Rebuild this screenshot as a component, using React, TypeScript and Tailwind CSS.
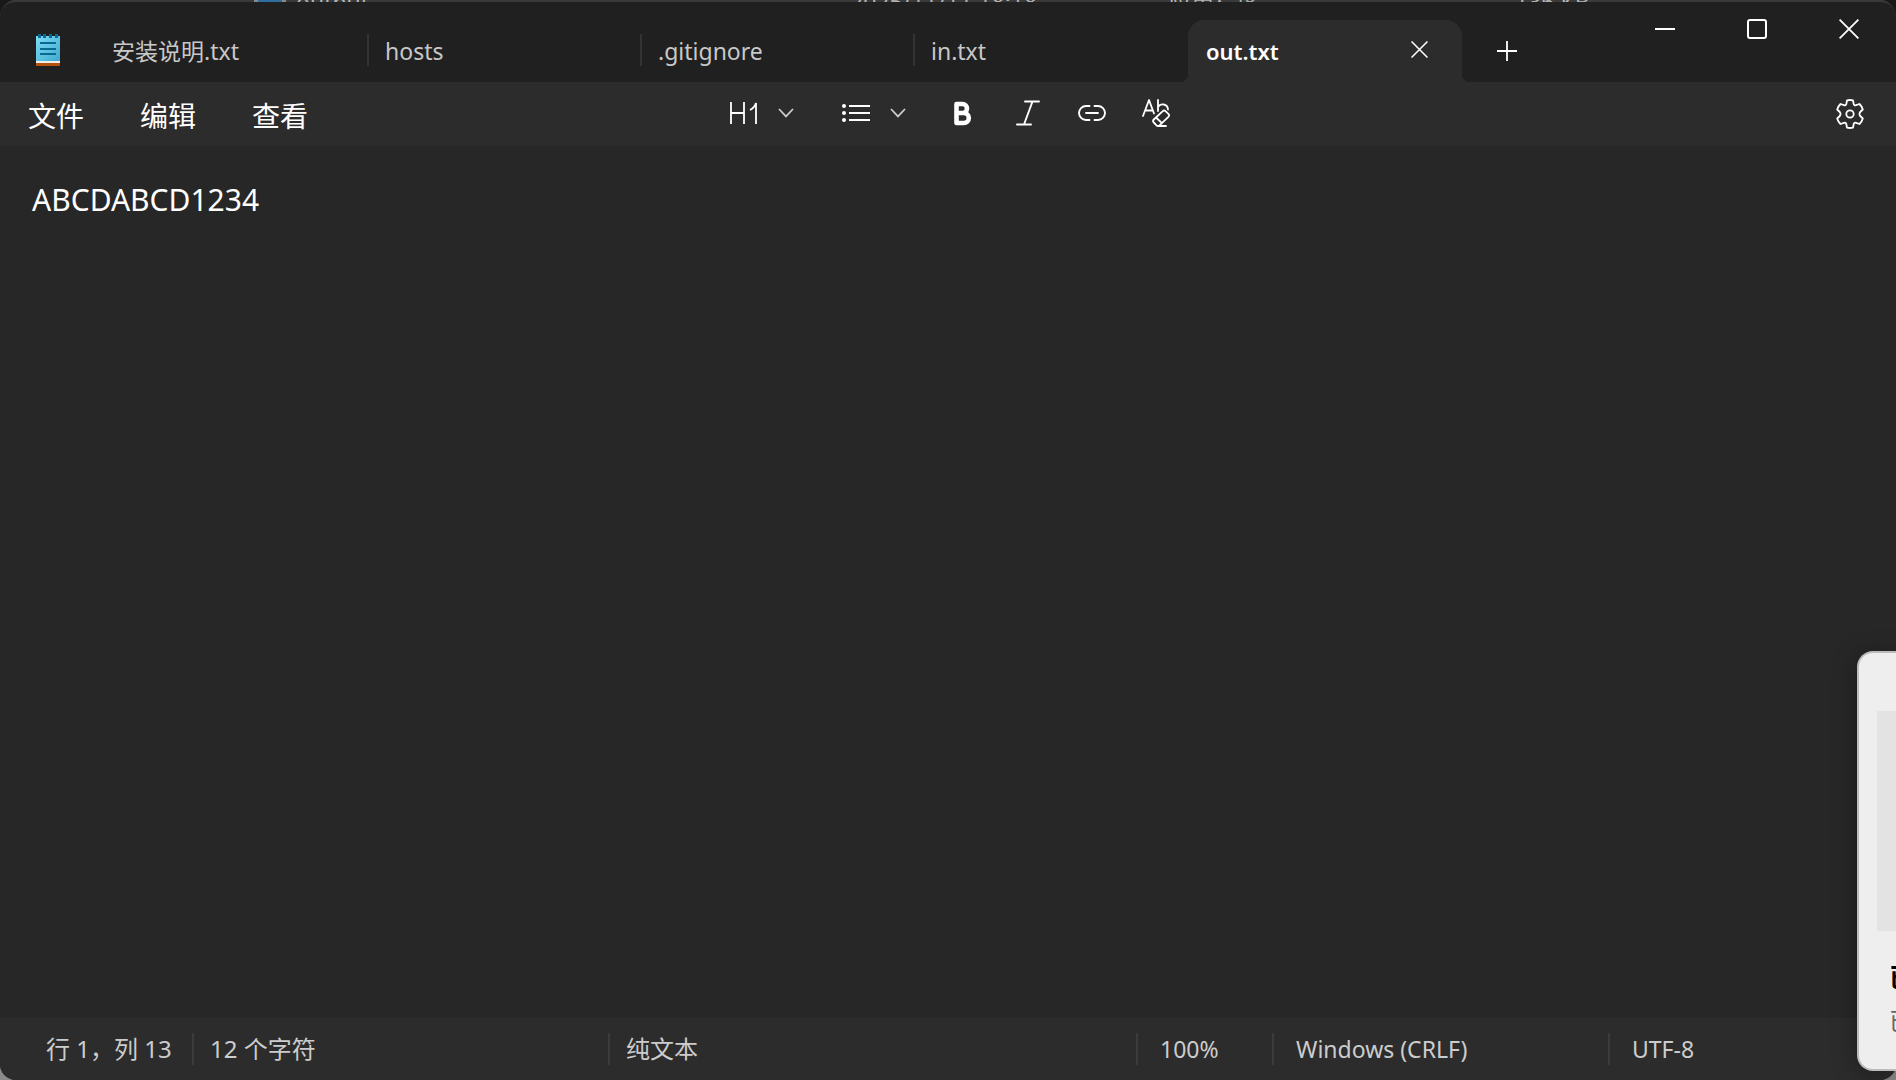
import { useState } from "react";

interface TabItem {
  id: number;
  name: string;
}

const tabs: TabItem[] = [
  { id: 1, name: "安装说明.txt" },
  { id: 2, name: "hosts" },
  { id: 3, name: ".gitignore" },
  { id: 4, name: "in.txt" },
  { id: 5, name: "out.txt" },
];

const menus = ["文件", "编辑", "查看"];

const NotepadIcon = () => (
  <svg width="24" height="32" viewBox="0 0 24 32" aria-hidden="true">
    <defs>
      <linearGradient id="page" x1="0" y1="0" x2="1" y2="1">
        <stop offset="0" stopColor="#7fdcf5" />
        <stop offset="1" stopColor="#3fa9cf" />
      </linearGradient>
    </defs>
    <path d="M0 28h24v3a1 1 0 0 1-1 1H0z" fill="#b35309" />
    <path d="M0 26h24v3H0z" fill="#f0eeec" />
    <path d="M0 2h24v25H0z" fill="url(#page)" />
    <path d="M2 0h3v4H2zM7 0h3v4H7zM13 0h3v4h-3zM19 0h3v4h-3z" fill="#056b92" />
    <path d="M4 9h16M4 15h16M4 20h16" stroke="#056b92" strokeWidth="2" />
  </svg>
);

const ChevronIcon = () => (
  <svg width="16" height="10" viewBox="0 0 16 10" fill="none" stroke="#cfcfcf" strokeWidth="1.7" aria-hidden="true">
    <path d="M1 1l7 7.4L15 1" />
  </svg>
);

const CrossIcon = ({ size }: { size: number }) => (
  <svg width={size} height={size} viewBox="0 0 20 20" fill="none" stroke="currentColor" strokeWidth="1.8" aria-hidden="true">
    <path d="M.6.6l18.8 18.8M19.4.6L.6 19.4" />
  </svg>
);

const HeadingIcon = () => (
  <svg width="28" height="22" viewBox="0 0 28 22" fill="none" stroke="currentColor" strokeWidth="1.8" aria-hidden="true">
    <path d="M1 0v22M14 0v22M1 11h13M26 22V1c-1 3-3 5.500-6 7" />
  </svg>
);

const ListIcon = () => (
  <svg width="28" height="18" viewBox="0 0 28 18" fill="none" stroke="currentColor" strokeWidth="1.9" aria-hidden="true">
    <path d="M7 2h21M7 9h21M7 16h21" />
    <g fill="currentColor" stroke="none">
      <circle cx="2" cy="2" r="2" />
      <circle cx="2" cy="9" r="2" />
      <circle cx="2" cy="16" r="2" />
    </g>
  </svg>
);

const BoldIcon = () => (
  <svg width="18" height="25" viewBox="0 0 18 24" fill="none" stroke="currentColor" strokeWidth="4.600" strokeLinejoin="round" aria-hidden="true">
    <path d="M2.500 2.500h6a4.400 4.400 0 0 1 0 9h-6zM2.500 11.500h7.300a5 5 0 0 1 0 10H2.500z" />
  </svg>
);

const ItalicIcon = () => (
  <svg width="24" height="26" viewBox="0 0 24 26" fill="none" stroke="currentColor" strokeWidth="1.9" strokeLinecap="round" aria-hidden="true">
    <path d="M9 1.500h14M1 24.500h14M16.500 1.500L8 24.500" />
  </svg>
);

const LinkIcon = () => (
  <svg width="28" height="16" viewBox="0 0 28 16" fill="none" stroke="currentColor" strokeWidth="1.9" strokeLinecap="round" aria-hidden="true">
    <path d="M11.500 1H8a7 7 0 0 0 0 14h3.500M16.500 1H20a7 7 0 0 1 0 14h-3.500M8 8h12" />
  </svg>
);

const ClearFormatIcon = () => (
  <svg width="28" height="28" viewBox="0 0 28 28" fill="none" stroke="currentColor" strokeWidth="1.8" strokeLinecap="round" strokeLinejoin="round" aria-hidden="true">
    <path d="M1 17L7 1l5 13.500M3.200 11.500h7.800" />
    <path d="M16 1v11M16 8c2.500-4 9.500-3.500 10 2.500" />
    <path d="M20.500 12.300l-8.700 8.200c-1 1-1 2 0 3l2.700 2.800c.9.900 2 .9 3 0l8.900-8.500c.9-.9.900-2 0-3l-2.900-2.700c-.9-.8-2-.8-3 .2zM14 18.500l6 5.700M17 27h7" />
  </svg>
);

const GearIcon = () => (
  <svg width="28" height="30" viewBox="0 0 28 30" fill="none" stroke="currentColor" strokeWidth="1.800" strokeLinejoin="round" aria-hidden="true">
    <path d="M11 1.400Q14 .6 17 1.400L17.700 5Q18.200 6.800 20 6.200L23.500 5Q25.900 7.300 26.800 10.500L24.200 13Q22.800 15 24.200 17L26.800 19.500Q25.900 22.700 23.500 25L20 23.800Q18.200 23.200 17.700 25L17 28.600Q14 29.400 11 28.600L10.300 25Q9.800 23.200 8 23.800L4.500 25Q2.100 22.700 1.200 19.500L3.800 17Q5.200 15 3.800 13L1.200 10.500Q2.100 7.300 4.500 5L8 6.200Q9.800 6.800 10.300 5Z" />
    <circle cx="14" cy="15" r="3.700" />
  </svg>
);

// Sliver of the file explorer row behind the window
const ExplorerStrip = () => (
  <div className="absolute inset-x-0 top-0 flex h-[2px] items-start overflow-hidden bg-[#3a3a3a] text-[23px] leading-[4px] whitespace-nowrap text-[#b4b4b4]">
    <span className="ml-[254px] h-1 w-8 border-x-4 border-[#8a8a8a] bg-[#2f6f9f]" />
    <span className="ml-[10px] w-[554px]">output</span>
    <span className="w-[318px]">2025/11/11 18:18</span>
    <span className="w-[347px]">应用程序</span>
    <span>136 KB</span>
  </div>
);

const TitleBar = ({ activeTab, onSelect }: { activeTab: number; onSelect: (id: number) => void }) => (
  <header className="flex h-[82px] shrink-0 bg-[#202020] text-white">
    <div className="flex w-24 shrink-0 items-center justify-center pt-[18px]">
      <NotepadIcon />
    </div>
    <div className="flex min-w-0 flex-1 items-end">
      {tabs.map((tab, index) =>
        tab.id === activeTab ? (
          <div
            key={tab.id}
            className="relative flex h-[62px] w-[274px] items-center justify-between rounded-t-2xl bg-[#2c2c2c] pr-[34px] pl-[18px] before:absolute before:bottom-0 before:-left-2 before:size-2 before:rounded-br-lg before:shadow-[4px_4px_0_#2c2c2c] before:[clip-path:inset(0)] after:absolute after:-right-2 after:bottom-0 after:size-2 after:rounded-bl-lg after:shadow-[-4px_4px_0_#2c2c2c] after:[clip-path:inset(0)]"
          >
            <button className="text-[22px] font-semibold">{tab.name}</button>
            <button className="pb-1" aria-label="关闭选项卡">
              <CrossIcon size={17} />
            </button>
          </div>
        ) : (
          <div key={tab.id} className="flex h-[62px] w-[273px] items-center">
            <button
              onClick={() => onSelect(tab.id)}
              className="flex-1 pl-4 text-left text-[23px] text-[#c8c8c8]"
            >
              {tab.name}
            </button>
            {tabs[index + 1]?.id !== activeTab && <span className="mb-0.5 h-8 w-[2px] bg-[#333333]" />}
          </div>
        )
      )}
      <button className="flex h-[62px] w-[90px] items-center justify-center" aria-label="新建选项卡">
        <svg width="20" height="20" viewBox="0 0 20 20" stroke="currentColor" strokeWidth="1.8" aria-hidden="true">
          <path d="M10 0v20M0 10h20" />
        </svg>
      </button>
    </div>
    <div className="flex h-[58px] shrink-0 pr-px">
      <button className="flex w-[92px] items-center justify-center" aria-label="最小化">
        <span className="h-[2px] w-5 bg-white" />
      </button>
      <button className="flex w-[92px] items-center justify-center" aria-label="最大化">
        <span className="size-5 rounded-[3px] border-2 border-white" />
      </button>
      <button className="flex w-[92px] items-center justify-center" aria-label="关闭">
        <CrossIcon size={20} />
      </button>
    </div>
  </header>
);

const Toolbar = () => (
  <div className="flex h-16 shrink-0 items-center bg-[#2c2c2c] text-white">
    <nav className="flex flex-1 gap-14 pt-1 pl-7 text-[28px] leading-8">
      {menus.map((menu) => (
        <button key={menu}>{menu}</button>
      ))}
    </nav>
    <div className="flex items-center pb-0.5 pl-2">
      <button className="flex items-center gap-5" aria-label="标题">
        <HeadingIcon />
        <ChevronIcon />
      </button>
      <button className="ml-12 flex items-center gap-5" aria-label="列表">
        <ListIcon />
        <ChevronIcon />
      </button>
      <button className="ml-12" aria-label="加粗">
        <BoldIcon />
      </button>
      <button className="ml-11" aria-label="斜体">
        <ItalicIcon />
      </button>
      <button className="ml-[38px]" aria-label="链接">
        <LinkIcon />
      </button>
      <button className="ml-9" aria-label="清除格式">
        <ClearFormatIcon />
      </button>
    </div>
    <div className="flex flex-1 justify-end pr-8">
      <button aria-label="设置">
        <GearIcon />
      </button>
    </div>
  </div>
);

const StatusBar = () => (
  <footer className="flex h-[62px] shrink-0 items-center bg-[#2c2c2c] text-[23px] leading-8 whitespace-nowrap text-[#cccccc]">
    <span className="w-[192px] pl-[46px] text-[24px]">行 1，列 13</span>
    <span className="w-[416px] border-l-2 border-[#3b3b3b] pl-4 text-[24px]">12 个字符</span>
    <span className="flex-1 border-l-2 border-[#3b3b3b] pl-4 text-[24px]">纯文本</span>
    <span className="w-[136px] border-l-2 border-[#3b3b3b] pl-[22px]">100%</span>
    <span className="w-[336px] border-l-2 border-[#3b3b3b] pl-[22px]">Windows (CRLF)</span>
    <span className="w-[288px] border-l-2 border-[#3b3b3b] pl-[22px]">UTF-8</span>
  </footer>
);

const SideCard = () => (
  <aside className="absolute right-0 bottom-[9px] flex h-[420px] w-[39px] flex-col overflow-hidden rounded-l-2xl border-2 border-r-0 border-[#bcbcbc] bg-[#eeeeee] pl-[18px] whitespace-nowrap shadow-[0_4px_24px_rgba(0,0,0,0.35)]">
    <div className="mt-[58px] h-[220px] shrink-0 bg-[#e3e3e3]" />
    <p className="mt-[26px] pl-3 text-[26px] leading-10 font-bold text-black">已</p>
    <p className="mt-1 pl-3 text-[24px] leading-10 text-[#666666]">已</p>
  </aside>
);

const App = () => {
  const [activeTab, setActiveTab] = useState(5);
  const [content, setContent] = useState("ABCDABCD1234");

  return (
    <div className="relative h-screen overflow-hidden bg-[#8a8a8a] font-['Noto_Sans','Noto_Sans_CJK_SC',sans-serif]">
      <div className="absolute inset-x-0 top-0 h-10 bg-[#181818]" />
      <div className="relative flex h-full flex-col overflow-hidden rounded-2xl bg-[#272727]">
        <TitleBar activeTab={activeTab} onSelect={setActiveTab} />
        <Toolbar />
        <textarea
          aria-label="文本编辑器"
          spellCheck={false}
          value={content}
          onChange={(e) => setContent(e.target.value)}
          className="min-h-0 flex-1 resize-none bg-[#272727] px-8 pt-[34px] pb-8 text-[30px] leading-10 text-white outline-none"
        />
        <StatusBar />
        <div className="pointer-events-none absolute inset-x-0 top-0 h-10 rounded-t-2xl border-t-2 border-[#3a3a3a]" />
        <ExplorerStrip />
      </div>
      <SideCard />
    </div>
  );
};

export default App;
